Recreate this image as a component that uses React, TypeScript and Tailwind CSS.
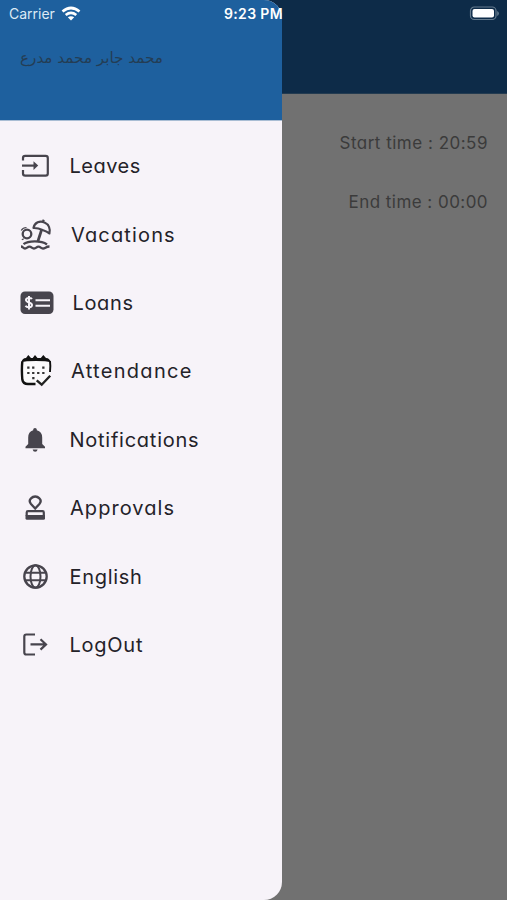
import type { ReactNode } from "react";

const ink = "#47444d";

function Icon({ children }: { children: ReactNode }) {
  return (
    <svg width="38" height="36" viewBox="0 0 38 36" fill="none" stroke={ink} strokeWidth="2" className="shrink-0">
      {children}
    </svg>
  );
}

const LeavesIcon = (
  <Icon>
    <path d="M5 12.5V10q0-2.2 2.2-2.2h20.4q2.2 0 2.2 2.2v15.500q0 2.200-2.200 2.200H7.200Q5 27.700 5 25.500V22" strokeWidth="2.200" />
    <path d="M4 17.600h12" strokeWidth="2.200" />
    <path d="m15.500 13.200 4.700 4.400-4.700 4.400Z" fill={ink} stroke="none" />
  </Icon>
);

const VacationsIcon = (
  <Icon>
    <circle cx="9" cy="17" r="4.300" strokeWidth="2.300" />
    <path d="M3.200 13.500Q5 10.500 8.500 10.500M3.800 22.800l2-1" strokeWidth="1.200" />
    <path d="M15.500 11C16.500 5.500 22 3.300 26.500 5.500C31 7.500 32.500 12 31.400 16.500C29.500 14.800 27 13.800 24.500 13C22 11.800 19 10.800 15.500 11ZM25 4.500l.8-1.800" strokeWidth="2.200" strokeLinejoin="round" />
    <path d="M23.500 13 19.700 25" strokeWidth="2.700" />
    <path d="M5.500 27.200C10 23.700 23 23.200 29 27.500" strokeWidth="2.300" />
    <path d="M3 29.500c2 0 2 2 4 2s2.300-1.800 4.500-1.800 2.300 1.800 4.500 1.800 2.300-1.800 4.500-1.800 2.300 1.800 4.500 1.800 3-2 6.500-2" strokeWidth="2.300" />
  </Icon>
);

const LoansIcon = (
  <Icon>
    <rect x="2.500" y="6.500" width="33" height="22.500" rx="4.500" fill={ink} stroke="none" />
    <path d="M14 14C12.800 12.500 8 12.300 8 15s6 2.200 6 5-5 3-6.500.8M11 11v13.500" stroke="#f7f3f9" />
    <path d="M17.500 15.200H32M17.500 20.700H32" stroke="#f7f3f9" strokeWidth="1.900" />
  </Icon>
);

const AttendanceIcon = (
  <Icon>
    <rect x="4" y="5" width="28" height="26" rx="4" fill="#fbfafb" stroke="none" />
    <path d="M3.500 9.500Q4 5 8 5L10.300 2 13 5H14.700L17 2 19.500 5H22.800L25.300 2 28 5Q32 5 32.500 9.500Q29 8.100 18 8.100T3.500 9.500Z" fill="#111" stroke="none" />
    <path d="M4.300 8.500Q3.500 16 4.300 26.500Q5 31 10 31H17.500" stroke="#111" strokeWidth="2.400" />
    <path d="M32 8Q32.700 13 32 19" stroke="#111" strokeWidth="1.900" />
    <path d="M18.700 27.300 23.700 31.700 32.200 22.700" stroke="#222" strokeWidth="2.400" />
    <path d="M9.200 14.700h2.300m2.600 0h2.300m7.800 0h2.300M9.200 20h2.300m2.600 0h2.300m2.700 0h2.300m2.800 0h2.300M14.200 25.200h2.300" stroke="#333" strokeWidth="2.200" />
  </Icon>
);

const BellIcon = (
  <Icon>
    <path d="M7.500 26.200V24.800L10.200 22V15.500Q10.200 9.500 15.200 8.200V7.500Q15.200 5.900 17 5.900T18.800 7.500V8.200Q24.200 9.500 24.200 15.500V22L27 24.800V26.200Z" fill={ink} stroke="none" />
    <path d="M14.600 27.500h5q-.5 2.300-2.500 2.300t-2.500-2.300Z" fill={ink} stroke="none" />
  </Icon>
);

const ApprovalsIcon = (
  <Icon>
    <path d="m17.200 18.500-4.200-4.500q-2.600-3 0-5.600 1.800-1.900 4.200-1.900t4.200 1.900q2.600 2.600 0 5.600Z" strokeWidth="2.300" />
    <path d="M8.700 25.700V22.500q0-1.300 1.300-1.300h14.500q1.300 0 1.300 1.300v3.200" strokeWidth="2.200" />
    <path d="M7.500 25h19.500v3.200q0 1.500-1.500 1.500H9q-1.500 0-1.500-1.500Z" fill={ink} stroke="none" />
  </Icon>
);

const GlobeIcon = (
  <Icon>
    <circle cx="17.500" cy="17.500" r="11.200" strokeWidth="2.300" />
    <ellipse cx="17.500" cy="17.500" rx="5" ry="11.200" />
    <path d="M7.300 13.700h20.400M7.300 21.300h20.400" />
  </Icon>
);

const LogOutIcon = (
  <Icon>
    <path d="M17 7.500H8.300q-2 0-2 2v16q0 2 2 2H17" strokeWidth="2.200" />
    <path d="M12.500 17.400h15M22.500 12.200l5.500 5.200-5.500 5.200" strokeWidth="2.200" />
  </Icon>
);

const items = [
  { label: "Leaves", icon: LeavesIcon, style: "ml-[13.5px] tracking-[0.5px]" },
  { label: "Vacations", icon: VacationsIcon, style: "ml-[15px] tracking-[1.15px]" },
  { label: "Loans", icon: LoansIcon, style: "ml-[16.5px] tracking-[0.65px]" },
  { label: "Attendance", icon: AttendanceIcon, style: "ml-[15px] tracking-[1.3px]" },
  { label: "Notifications", icon: BellIcon, style: "ml-[13.5px] tracking-[0.75px]" },
  { label: "Approvals", icon: ApprovalsIcon, style: "ml-[14px] tracking-[1.05px]" },
  { label: "English", icon: GlobeIcon, style: "ml-[13.5px] tracking-[0.7px]" },
  { label: "LogOut", icon: LogOutIcon, style: "ml-[13.5px] tracking-[0.75px]" },
];

function StatusBar() {
  return (
    <div className="absolute inset-x-0 top-0 flex h-[27px] items-center pl-[9px] pr-[7px] font-['Inter',sans-serif] text-white [font-feature-settings:normal]">
      <span className="w-[48px] whitespace-nowrap text-[14px] text-[#dceaf5]">Carrier</span>
      <svg width="20" height="16" viewBox="0 0 20 16" fill="none" stroke="white" strokeWidth="2.700" className="ml-[4px]">
        <path d="M1.500 5.500Q10-1.500 18.500 5.500M4.700 9Q10 4.800 15.300 9" />
        <path d="m6.800 11.300q3.200-2.300 6.400 0L10 14.500Z" fill="white" stroke="none" />
      </svg>
      <span className="ml-[143px] whitespace-nowrap text-[14px] font-semibold tracking-[0.35px]">9:23 PM</span>
      <svg width="32" height="15" viewBox="0 0 32 15" fill="none" className="ml-auto">
        <rect x="2.500" y="1" width="25.500" height="12.500" rx="3.800" stroke="#657b8e" strokeWidth="1.200" />
        <rect x="4.500" y="3" width="21.500" height="8.500" rx="2" fill="white" />
        <path d="M29.200 5v5q1.700-.8 1.700-2.500T29.200 5Z" fill="#657b8e" />
      </svg>
    </div>
  );
}

export default function App() {
  return (
    <div className="relative h-[900px] w-[507px] overflow-hidden bg-[#717171] font-['Inter','Noto_Sans',sans-serif] [font-feature-settings:'cv11'_1]">
      <div className="h-[94px] border-b border-[#233b50] bg-[#0d2b48]" />
      <div className="flex flex-col items-end gap-[34.500px] pr-[19px] pt-[37px] text-[17px] leading-6 text-[#3b3b3b]">
        <span className="tracking-[0.5px]">Start time : 20:59</span>
        <span className="tracking-[0.45px]">End time : 00:00</span>
      </div>
      <aside className="absolute left-0 top-0 h-[900px] w-[282px] overflow-hidden rounded-r-[18px] bg-[#f7f3f9]">
        <div className="h-[121px] border-b border-[#a9bdd4] bg-[#1e609e] pl-[20px] pt-[46px]">
          <div dir="rtl" className="w-[143px] whitespace-nowrap font-['DejaVu_Sans',sans-serif] text-[15.200px] leading-6 text-[#243d54]">
            محمد جابر محمد مدرع
          </div>
        </div>
        <nav className="flex flex-col pl-[18px] pt-[11px]">
          {items.map((item) => (
            <div key={item.label} className="flex h-[68.400px] items-center">
              {item.icon}
              <span className={`whitespace-nowrap text-[20px] leading-7 text-[#242229] ${item.style}`}>{item.label}</span>
            </div>
          ))}
        </nav>
      </aside>
      <StatusBar />
    </div>
  );
}
